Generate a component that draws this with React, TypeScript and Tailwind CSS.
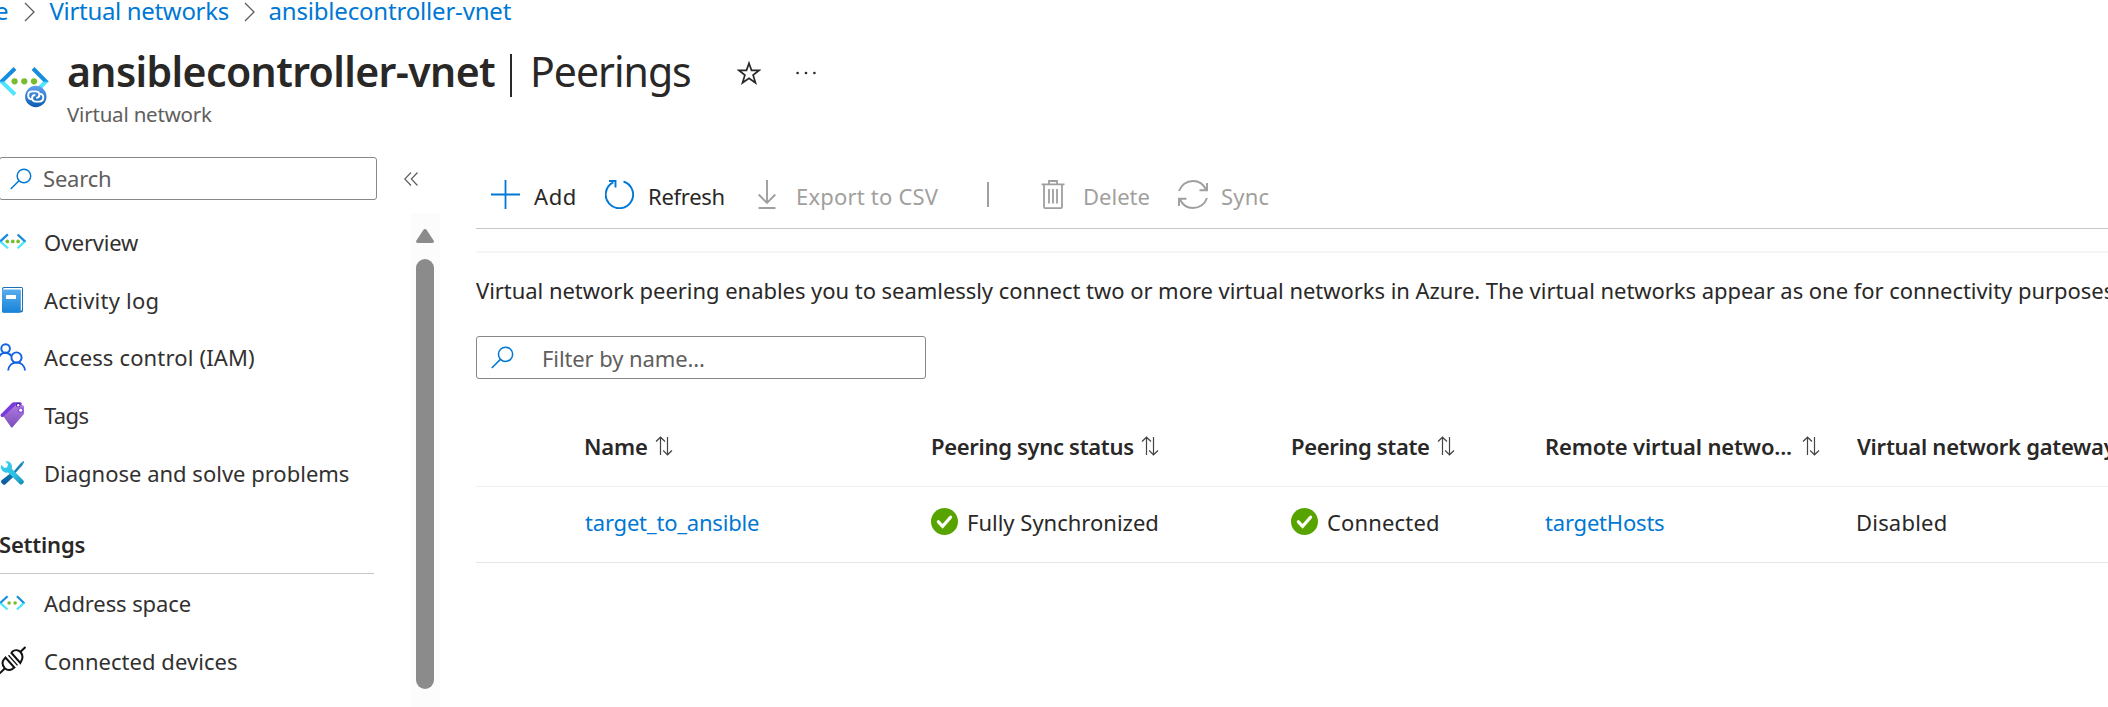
import type { ReactNode } from "react";

function VnetIcon({ className, dots = 3, id }: { className: string; dots?: number; id: string }) {
  const xs = dots === 3 ? [13.5, 23.5, 33.5] : [17.5, 29];
  return (
    <svg viewBox="0 0 48 30" className={className} fill="none">
      <defs>
        <linearGradient id={id} x1="0" y1="1" x2="0" y2="29" gradientUnits="userSpaceOnUse">
          <stop offset="0" stopColor="#1988d9" />
          <stop offset="0.48" stopColor="#1590e4" />
          <stop offset="0.54" stopColor="#50e6ff" />
          <stop offset="1" stopColor="#50e6ff" />
        </linearGradient>
      </defs>
      <path d="M14.500 2 .500 14.800 14.500 27.500M32.500 2l13.500 12.800L32.500 27.500" stroke={`url(#${id})`} strokeWidth="4.200" />
      {xs.map((x) => (
        <circle key={x} cx={x} cy="14.8" r="3.4" fill="#76bc2d" />
      ))}
    </svg>
  );
}

function ResourceIcon() {
  return (
    <svg viewBox="0 0 50 42" className="h-[42px] w-[50px]" fill="none">
      <defs>
        <linearGradient id="res-arrow" x1="0" y1="1" x2="0" y2="30" gradientUnits="userSpaceOnUse">
          <stop offset="0" stopColor="#1988d9" />
          <stop offset="0.48" stopColor="#1590e4" />
          <stop offset="0.54" stopColor="#50e6ff" />
          <stop offset="1" stopColor="#50e6ff" />
        </linearGradient>
        <linearGradient id="res-badge" x1="0" y1="20" x2="0" y2="41" gradientUnits="userSpaceOnUse">
          <stop offset="0" stopColor="#5ea0ef" />
          <stop offset="1" stopColor="#0a5cb0" />
        </linearGradient>
      </defs>
      <path d="M15 2.500 1.500 15.500l13.500 13M33 2.500l13 13-13 13" stroke="url(#res-arrow)" strokeWidth="4" />
      <circle cx="14.6" cy="15.3" r="3.1" fill="#76bc2d" />
      <circle cx="24.3" cy="15.3" r="3.1" fill="#76bc2d" />
      <circle cx="34" cy="15.3" r="3.1" fill="#76bc2d" />
      <circle cx="35.8" cy="30.5" r="10.7" fill="url(#res-badge)" />
      <path
        d="M32.500 33.300c-2.600 0-4.300-1.600-4.300-3.900s1.700-4 4.100-4h3.200c2.300 0 3.900 1.500 3.900 3.400 0 1.800-1.300 3.100-3.200 3.100M39 27.600c2.600 0 4.300 1.700 4.300 4s-1.700 4-4.100 4H36c-2.300 0-3.900-1.500-3.900-3.500 0-1.800 1.300-3.100 3.200-3.100"
        stroke="#fff"
        strokeWidth="1.900"
      />
    </svg>
  );
}

function LogIcon() {
  return (
    <svg viewBox="0 0 26 28" className="h-[28px] w-[26px]">
      <defs>
        <linearGradient id="log" x1="0" y1="2" x2="0" y2="27" gradientUnits="userSpaceOnUse">
          <stop offset="0" stopColor="#5eb0ef" />
          <stop offset="1" stopColor="#1583d8" />
        </linearGradient>
      </defs>
      <path d="M4 1h17.500a1.500 1.500 0 0 1 1.500 1.500V24a2.500 2.500 0 0 1-2.500 2.500H4A2 2 0 0 1 2 24.500V3a2 2 0 0 1 2-2Z" fill="#1a6fba" />
      <path d="M4.500 2H22v22l-1.500 1V4H3a1.500 1.500 0 0 1 1.500-2Z" fill="#fff" />
      <path d="M2 3.500h18.500V25a2 2 0 0 1-1.500 1.800H3.500A1.500 1.500 0 0 1 2 25.300Z" fill="url(#log)" />
      <rect x="6" y="9" width="10" height="4" rx="0.500" fill="#fff" />
    </svg>
  );
}

function PeopleIcon() {
  return (
    <svg viewBox="0 0 26 28" className="h-[28px] w-[26px]" fill="none" stroke="#0f62e0" strokeWidth="1.900">
      <circle cx="5.600" cy="5.500" r="4.300" />
      <circle cx="16.500" cy="14.500" r="5.100" />
      <path d="M-1 14.500c.8-3 3.200-4.800 6.300-4.800 2.600 0 4.700 1.200 6 3.300M8.200 27.500c.5-5 3.900-8 8.400-8s7.900 3 8.400 8" />
    </svg>
  );
}

function TagIcon() {
  return (
    <svg viewBox="0 0 26 28" className="h-[28px] w-[26px]">
      <defs>
        <linearGradient id="tag" x1="0" y1="4" x2="0" y2="27" gradientUnits="userSpaceOnUse">
          <stop offset="0" stopColor="#b077e0" />
          <stop offset="1" stopColor="#7a4fb8" />
        </linearGradient>
      </defs>
      <path d="M1.400 12.800 12 1.900a3 3 0 0 1 1.800-.7l6.200.1a2 2 0 0 1 2 2L3.500 15.800a1.500 1.500 0 0 1-2.100-3Z" fill="#773adc" />
      <path d="M3.500 15.500 15.500 4.300a2 2 0 0 1 1.300-.5l5.200.3a2 2 0 0 1 2 2l.1 5.900a2 2 0 0 1-.6 1.500L12.500 26.300a1 1 0 0 1-1.400 0Z" fill="url(#tag)" />
      <circle cx="18.200" cy="4" r="2.200" fill="#4a1fa0" />
      <circle cx="18.200" cy="4.200" r="1.200" fill="#fff" />
      <circle cx="20.700" cy="9.200" r="2.500" fill="#773adc" />
      <circle cx="20.700" cy="9.200" r="1.600" fill="#fff" />
    </svg>
  );
}

function ToolsIcon() {
  return (
    <svg viewBox="0 0 26 26" className="h-[26px] w-[26px]">
      <defs>
        <linearGradient id="driver" x1="22" y1="2" x2="2" y2="24" gradientUnits="userSpaceOnUse">
          <stop offset="0" stopColor="#1b93c0" />
          <stop offset="1" stopColor="#0a5a9e" />
        </linearGradient>
        <linearGradient id="wrench" x1="4" y1="2" x2="22" y2="24" gradientUnits="userSpaceOnUse">
          <stop offset="0" stopColor="#35cdee" />
          <stop offset="0.600" stopColor="#2bc0e4" />
          <stop offset="1" stopColor="#1a8fb8" />
        </linearGradient>
      </defs>
      <path d="m23.500 1 .8.800-2 3.800-7.600 8.200-1.600-1.600 7.200-8.800ZM10.500 13.200l3.300 3.200-8.300 7.800a2 2 0 0 1-2.600 0l-1.300-1.300a2 2 0 0 1 0-2.700Z" fill="url(#driver)" />
      <path
        d="M5.400 1c3.600-.4 6.900 2.500 6.600 6.200l-.2 1.600 11.600 11.600a2 2 0 0 1 0 2.700l-1 1a2 2 0 0 1-2.800 0L8.200 12.600c-3.700.8-7.400-2-7.300-6.200l.3-1.700 3.200 3.200 2.800-.7.800-2.900Z"
        fill="url(#wrench)"
      />
    </svg>
  );
}

function PlugIcon() {
  return (
    <svg viewBox="0 0 26 28" className="h-[28px] w-[26px]" fill="none" stroke="#111" strokeWidth="2">
      <path d="m25.500 1-5 4.800M5 22.200l-5.500 5.300" />
      <path d="m11.500 7 8.800 10 1.500-3.200c1.200-2.600.5-5.600-1.300-7.800-2.300-2.200-5.800-2.400-8-.5ZM14.300 21.500 5.500 11.500 3.500 14c-1.500 2.500-.8 5.800 1.200 8.100 2.300 2.200 5.500 2.200 7.900.7Z" />
      <path d="m8.500 9.200 9 10.200" strokeWidth="1.300" />
    </svg>
  );
}

function SearchIcon({ className }: { className: string }) {
  return (
    <svg viewBox="0 0 24 24" className={className} fill="none" stroke="#0078d4" strokeWidth="1.600">
      <circle cx="15.200" cy="8.700" r="7.400" />
      <path d="M9.800 14 .8 23" />
    </svg>
  );
}

function Chevron() {
  return (
    <svg viewBox="0 0 11 20" className="mt-[2px] h-[20px] w-[11px]" fill="none" stroke="#605e5c" strokeWidth="1.300">
      <path d="m1 1 9 9-9 9" />
    </svg>
  );
}

function SortIcon() {
  return (
    <svg viewBox="0 0 18 20" className="h-[20px] w-[18px] shrink-0" fill="none" stroke="#444" strokeWidth="1.200">
      <path d="M5.500 19V1.500M1 5.500l4.500-4.300L10 5.500M12.500 1v17.500M8.200 14.500l4.300 4.300 4.500-4.300" />
    </svg>
  );
}

function CheckBadge() {
  return (
    <svg viewBox="0 0 27 27" className="-mt-px h-[27px] w-[27px] shrink-0">
      <circle cx="13.500" cy="13.500" r="13.500" fill="#57a300" />
      <path d="m7.400 13.800 4.200 4.600 8-9.200" fill="none" stroke="#fff" strokeWidth="3.200" strokeLinecap="round" />
    </svg>
  );
}

function MenuItem({ icon, children, className }: { icon: ReactNode; children: ReactNode; className: string }) {
  return (
    <a className="flex h-[57.75px] items-center">
      <span className="flex w-[44px] shrink-0 items-center">{icon}</span>
      <span className={className}>{children}</span>
    </a>
  );
}

function Sidebar() {
  return (
    <aside className="flex w-[440px] shrink-0 flex-col pt-[29px]">
      <div className="flex h-[43px] items-center">
        <div className="-ml-px flex h-[43px] w-[378px] items-center rounded-[3px] border border-[#8a8886] pl-[10px]">
          <SearchIcon className="h-[22px] w-[22px]" />
          <span className="-mt-[2px] ml-[11px] tracking-[-0.2px] text-[#605e5c]">Search</span>
        </div>
        <svg viewBox="0 0 14 14" className="ml-[27px] h-[14px] w-[14px]" fill="none" stroke="#605e5c" strokeWidth="1.200">
          <path d="M7 .500.800 7 7 13.500M13.500.500 7.300 7l6.200 6.500" />
        </svg>
      </div>
      <div className="mt-[13px] flex flex-1">
        <nav className="w-[410px] text-[#323130]">
          <MenuItem icon={<VnetIcon id="v1" className="h-[17px] w-[26px]" />} className="tracking-[-0.25px]">Overview</MenuItem>
          <MenuItem icon={<LogIcon />} className="tracking-[0.23px]">Activity log</MenuItem>
          <MenuItem icon={<PeopleIcon />} className="tracking-[0.15px]">Access control (IAM)</MenuItem>
          <MenuItem icon={<TagIcon />} className="tracking-[-0.6px]">Tags</MenuItem>
          <MenuItem icon={<ToolsIcon />} className="">Diagnose and solve problems</MenuItem>
          <h2 className="-ml-px flex h-[72px] w-[375px] items-end border-b border-[#c8c6c4] pb-[11px] leading-[36px] font-semibold tracking-[-0.2px] text-[#292827]">
            Settings
          </h2>
          <MenuItem icon={<VnetIcon id="v2" dots={2} className="h-[16px] w-[25px]" />} className="tracking-[-0.1px]">Address space</MenuItem>
          <MenuItem icon={<PlugIcon />} className="pt-px tracking-[0.04px]">Connected devices</MenuItem>
        </nav>
        <div className="flex w-[30px] flex-col items-center bg-[#fcfcfc] pt-[16px]">
          <svg viewBox="0 0 18 14" className="h-[14px] w-[18px]" fill="#8b8b8b">
            <path d="M7.300 1a2.200 2.200 0 0 1 3.400 0l6.900 10.500c.8 1.300.1 2.500-1.300 2.500H1.700C.3 14-.4 12.800.4 11.500Z" />
          </svg>
          <div className="mt-[16px] h-[430px] w-[18px] rounded-full bg-[#8b8b8b]" />
        </div>
      </div>
    </aside>
  );
}

function Toolbar() {
  return (
    <div className="mt-[36px] flex h-[65px] items-center border-b border-[#c8c6c4] pl-[15px] text-[#292827]">
      <svg viewBox="0 0 29 29" className="-mt-[3px] h-[29px] w-[29px]" stroke="#0078d4" strokeWidth="1.800">
        <path d="M14.500 0v29M0 14.500h29" />
      </svg>
      <span className="ml-[14px] w-[71px] tracking-[0.6px]">Add</span>
      <svg viewBox="0 0 29 29" className="-mt-[3px] h-[29px] w-[29px]" fill="none" stroke="#0078d4" strokeWidth="1.900">
        <path d="M18.500 1.500A13.700 13.700 0 1 1 8.300 2.300M4 1h6.500v6.500" />
      </svg>
      <span className="ml-[14px] w-[110px] tracking-[-0.28px]">Refresh</span>
      <svg viewBox="0 0 18 29" className="-mt-[3px] h-[29px] w-[18px]" fill="none" stroke="#a19f9d" strokeWidth="1.900">
        <path d="M9 0v22.500M.700 14.500 9 22.800l8.300-8.300M.500 28h17" />
      </svg>
      <span className="ml-[20px] w-[191px] tracking-[0.2px] text-[#a19f9d]">Export to CSV</span>
      <div className="-mt-[3px] h-[25px] w-[2px] bg-[#a19f9d]" />
      <svg viewBox="0 0 24 29" className="-mt-[3px] ml-[52px] h-[29px] w-[24px]" fill="none" stroke="#a19f9d" strokeWidth="1.800">
        <path d="M.500 4.300h23M8 4V1h8v3M3 4.500v22.200a1.500 1.500 0 0 0 1.500 1.500h15a1.500 1.500 0 0 0 1.500-1.500V4.500M8 9v14.500M12 9v14.500M16 9v14.500" />
      </svg>
      <span className="ml-[18px] w-[95px] text-[#a19f9d]">Delete</span>
      <svg viewBox="0 0 30 29" className="-mt-[3px] h-[29px] w-[30px]" fill="none" stroke="#a19f9d" strokeWidth="1.900">
        <path d="M1 11C3 5 8.500 1 15 1c6 0 10.500 3.200 13 8.500M29 3v7.300h-7.500M29 18c-2 6-7.500 10-14 10-6 0-10.500-3.200-13-8.500M1 26v-7.300h7.500" />
      </svg>
      <span className="ml-[13px] tracking-[0.2px] text-[#a19f9d]">Sync</span>
    </div>
  );
}

function PeeringTable() {
  return (
    <div className="mt-[27px] text-[#292827]">
      <div className="flex h-[81px] items-center border-b border-[#f0efee] pl-[108px] font-semibold">
        <div className="flex w-[347px] items-center">
          <span className="mr-[7px] tracking-[-0.15px]">Name</span>
          <SortIcon />
        </div>
        <div className="flex w-[360px] items-center">
          <span className="mr-[7px] tracking-[-0.32px]">Peering sync status</span>
          <SortIcon />
        </div>
        <div className="flex w-[254px] items-center">
          <span className="mr-[7px] tracking-[-0.34px]">Peering state</span>
          <SortIcon />
        </div>
        <div className="flex w-[312px] items-center">
          <span className="mr-[10px] tracking-[-0.16px]">Remote virtual netwo...</span>
          <SortIcon />
        </div>
        <div className="w-[251px] overflow-hidden tracking-[-0.26px] whitespace-nowrap">Virtual network gateway</div>
      </div>
      <div className="flex h-[76px] items-center border-b border-[#e6e5e4] pb-[5px] pl-[109px]">
        <a className="w-[346px] tracking-[-0.2px] text-[#0078d4]">target_to_ansible</a>
        <div className="flex w-[360px] items-center gap-[9px]">
          <CheckBadge />
          <span>Fully Synchronized</span>
        </div>
        <div className="flex w-[254px] items-center gap-[9px]">
          <CheckBadge />
          <span className="tracking-[0.16px]">Connected</span>
        </div>
        <a className="w-[311px] tracking-[-0.2px] text-[#0078d4]">targetHosts</a>
        <span className="tracking-[0.2px]">Disabled</span>
      </div>
    </div>
  );
}

export default function App() {
  return (
    <div className="flex h-[707px] w-[2108px] flex-col overflow-hidden bg-white font-['Noto_Sans','Open_Sans',sans-serif] text-[22px] leading-[32px]">
      <div className="flex h-[22px] items-center text-[24px] leading-[22px] text-[#0078d4]">
        <span className="-ml-[5px] mr-[15px]">e</span>
        <Chevron />
        <span className="ml-[15px] w-[194px] tracking-[-0.33px]">Virtual networks</span>
        <Chevron />
        <span className="ml-[14px] tracking-[-0.19px]">ansiblecontroller-vnet</span>
      </div>
      <header className="flex h-[106px] pt-[21px] text-[#292827]">
        <div className="w-[67px] pt-[23px]">
          <ResourceIcon />
        </div>
        <div>
          <h1 className="flex h-[56px] items-center text-[41px] leading-[56px]">
            <span className="w-[443px] font-semibold tracking-[-0.61px]">ansiblecontroller-vnet</span>
            <span className="mt-[9px] mr-[18px] h-[43px] w-[2px] bg-[#292827]" />
            <span className="w-[207px] tracking-[-1px]">Peerings</span>
            <svg viewBox="0 0 24 24" className="mt-[3px] h-[24px] w-[24px]" fill="none" stroke="#292827" strokeWidth="1.700">
              <path d="m12 2.200 2.500 7.100h7.800l-6.200 4.700 2.400 7.800L12 17.200l-6.500 4.600L7.900 14 1.700 9.300h7.800Z" />
            </svg>
            <svg viewBox="0 0 20 4" className="mt-[3px] ml-[35px] h-[4px] w-[20px]" fill="#292827">
              <circle cx="1.600" cy="2" r="1.300" />
              <circle cx="10" cy="2" r="1.300" />
              <circle cx="18.400" cy="2" r="1.300" />
            </svg>
          </h1>
          <p className="h-[28px] text-[20.500px] leading-[30px] tracking-[-0.2px] text-[#605e5c]">Virtual network</p>
        </div>
      </header>
      <div className="flex flex-1">
        <Sidebar />
        <main className="ml-[36px] w-[1632px] overflow-hidden">
          <Toolbar />
          <div className="mt-[22px] border-t-2 border-[#f5f5f5]" />
          <p className="mt-[21px] tracking-[-0.045px] whitespace-nowrap text-[#292827]">
            Virtual network peering enables you to seamlessly connect two or more virtual networks in Azure. The virtual networks appear as one for connectivity purposes.
          </p>
          <div className="mt-[30px] flex h-[43px] w-[450px] items-center rounded-[3px] border border-[#8a8886] pl-[14px]">
            <SearchIcon className="h-[23px] w-[23px]" />
            <span className="ml-[28px] tracking-[-0.1px] text-[#605e5c]">Filter by name...</span>
          </div>
          <PeeringTable />
        </main>
      </div>
    </div>
  );
}
